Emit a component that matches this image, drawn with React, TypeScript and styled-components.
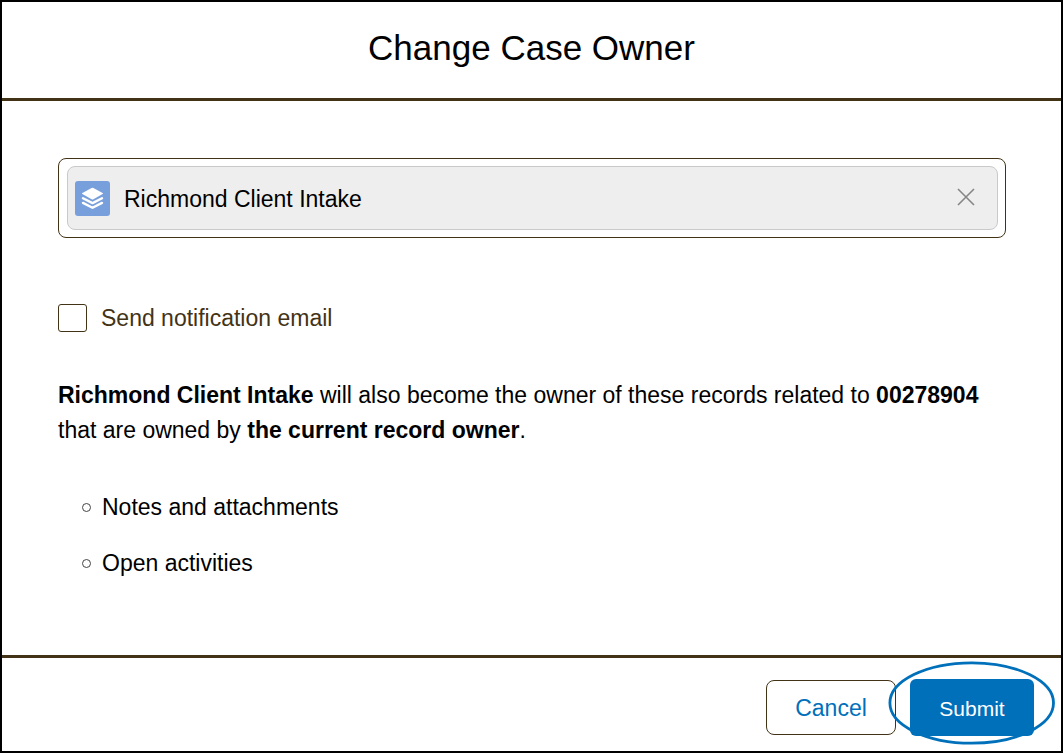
import React, { useState } from "react";
import styled, { createGlobalStyle } from "styled-components";

const brown = "#433316";
const blue = "#0070ba";

const GlobalStyle = createGlobalStyle`
  *, *::before, *::after { box-sizing: border-box; }
  body {
    margin: 0;
    background: #fff;
    color: #000;
    font-family: "Liberation Sans", Arial, sans-serif;
    font-size: 23px;
    line-height: 35px;
  }
`;

const Dialog = styled.form`
  display: flex;
  flex-direction: column;
  min-height: 100vh;
  border: 2px solid #000;
  overflow: hidden;
`;

const Header = styled.header`
  padding: 22px 24px 26px;
  border-bottom: 3px solid ${brown};
  text-align: center;
`;

const Title = styled.h1`
  margin: 0;
  font-size: 35px;
  font-weight: 400;
  line-height: 48px;
`;

const Body = styled.main`
  flex: 1;
  padding: 57px 55px 48px 56px;
`;

const Picker = styled.div`
  padding: 7px 7px 7px 8px;
  border: 1px solid ${brown};
  border-radius: 8px;
`;

const Pill = styled.div`
  display: flex;
  align-items: center;
  height: 64px;
  padding: 0 16px 0 7px;
  border: 1px solid #c9c9c9;
  border-radius: 8px;
  background: #eee;
`;

const QueueIcon = styled.svg`
  flex: none;
  width: 35px;
  height: 35px;
  border-radius: 3px;
  background: #779fdb;
`;

const OwnerInput = styled.input`
  flex: 1;
  min-width: 0;
  margin: 0 14px;
  padding: 2px 0 0;
  border: 0;
  outline: 0;
  background: transparent;
  color: inherit;
  font: inherit;
`;

const ClearButton = styled.button`
  display: flex;
  padding: 4px 6px 6px;
  border: 0;
  background: transparent;
  cursor: pointer;
`;

const CheckRow = styled.label`
  display: flex;
  align-items: center;
  gap: 14px;
  width: fit-content;
  margin-top: 62px;
  line-height: 36px;
  color: ${brown};
`;

const CheckBox = styled.input`
  appearance: none;
  width: 29px;
  height: 28px;
  margin: 0;
  border: 1px solid ${brown};
  border-radius: 3px;
  background: #fff;

  &:checked {
    background: ${blue};
    box-shadow: inset 0 0 0 5px #fff;
  }
`;

const Message = styled.p`
  margin: 42px 0 0;
`;

const RecordList = styled.ul`
  margin: 42px 0 0;
  padding: 0 0 0 24px;
  list-style: none;
`;

const RecordItem = styled.li`
  display: flex;
  align-items: center;
  gap: 11px;

  &::before {
    content: "";
    width: 9px;
    height: 9px;
    border: 1px solid #444;
    border-radius: 50%;
  }

  & + & {
    margin-top: 21px;
  }
`;

const Footer = styled.footer`
  display: flex;
  align-items: center;
  justify-content: flex-end;
  gap: 14px;
  padding: 18px 27px 12px;
  border-top: 3px solid ${brown};
`;

const CancelButton = styled.button`
  width: 130px;
  height: 55px;
  padding: 2px 0 0;
  border: 1px solid ${brown};
  border-radius: 8px;
  background: #fff;
  color: ${blue};
  font: inherit;
  cursor: pointer;
`;

const SubmitWrap = styled.div`
  display: flex;
  position: relative;
  margin: 3px 0;
`;

const SubmitButton = styled.button`
  width: 124px;
  height: 57px;
  padding: 2px 0 0;
  border: 0;
  border-radius: 6px;
  background: ${blue};
  color: #fff;
  font: inherit;
  font-size: 21px;
  cursor: pointer;
`;

const Highlight = styled.svg`
  position: absolute;
  top: -19px;
  left: -22px;
  pointer-events: none;
`;

export default function App() {
  const [owner, setOwner] = useState("Richmond Client Intake");
  const [notify, setNotify] = useState(false);

  return (
    <>
      <GlobalStyle />
      <Dialog onSubmit={(e) => e.preventDefault()}>
        <Header>
          <Title>Change Case Owner</Title>
        </Header>
        <Body>
          <Picker>
            <Pill>
              <QueueIcon viewBox="0 0 35 35" aria-hidden="true">
                <path
                  fill="#fff"
                  d="M16.6 7Q17.5 6.6 18.4 7L27.6 11.9Q28.5 12.5 27.6 13.1L18.4 18.2Q17.5 18.7 16.6 18.2L7.4 13.1Q6.5 12.5 7.4 11.9Z"
                />
                <path
                  fill="none"
                  stroke="#fff"
                  strokeWidth="2.4"
                  strokeLinecap="round"
                  strokeLinejoin="round"
                  d="M8 17.2L17.5 22.1L27 17.2M8 21.9L17.5 26.8L27 21.9"
                />
              </QueueIcon>
              <OwnerInput
                type="text"
                aria-label="Case owner"
                value={owner}
                onChange={(e) => setOwner(e.target.value)}
              />
              <ClearButton type="button" aria-label="Clear case owner" onClick={() => setOwner("")}>
                <svg width="18" height="18" viewBox="0 0 18 18" aria-hidden="true">
                  <path d="M1 1L17 17M17 1L1 17" stroke="#858585" strokeWidth="1.6" fill="none" />
                </svg>
              </ClearButton>
            </Pill>
          </Picker>
          <CheckRow>
            <CheckBox
              type="checkbox"
              checked={notify}
              onChange={(e) => setNotify(e.target.checked)}
            />
            Send notification email
          </CheckRow>
          <Message>
            <strong>Richmond Client Intake</strong> will also become the owner of these records
            related to <strong>00278904</strong> that are owned by{" "}
            <strong>the current record owner</strong>.
          </Message>
          <RecordList>
            <RecordItem>Notes and attachments</RecordItem>
            <RecordItem>Open activities</RecordItem>
          </RecordList>
        </Body>
        <Footer>
          <CancelButton type="button">Cancel</CancelButton>
          <SubmitWrap>
            <SubmitButton type="submit">Submit</SubmitButton>
            <Highlight width="168" height="86" viewBox="0 0 168 86" aria-hidden="true">
              <ellipse cx="83.7" cy="43" rx="81.8" ry="40.2" fill="none" stroke={blue} strokeWidth="2.8" />
            </Highlight>
          </SubmitWrap>
        </Footer>
      </Dialog>
    </>
  );
}
